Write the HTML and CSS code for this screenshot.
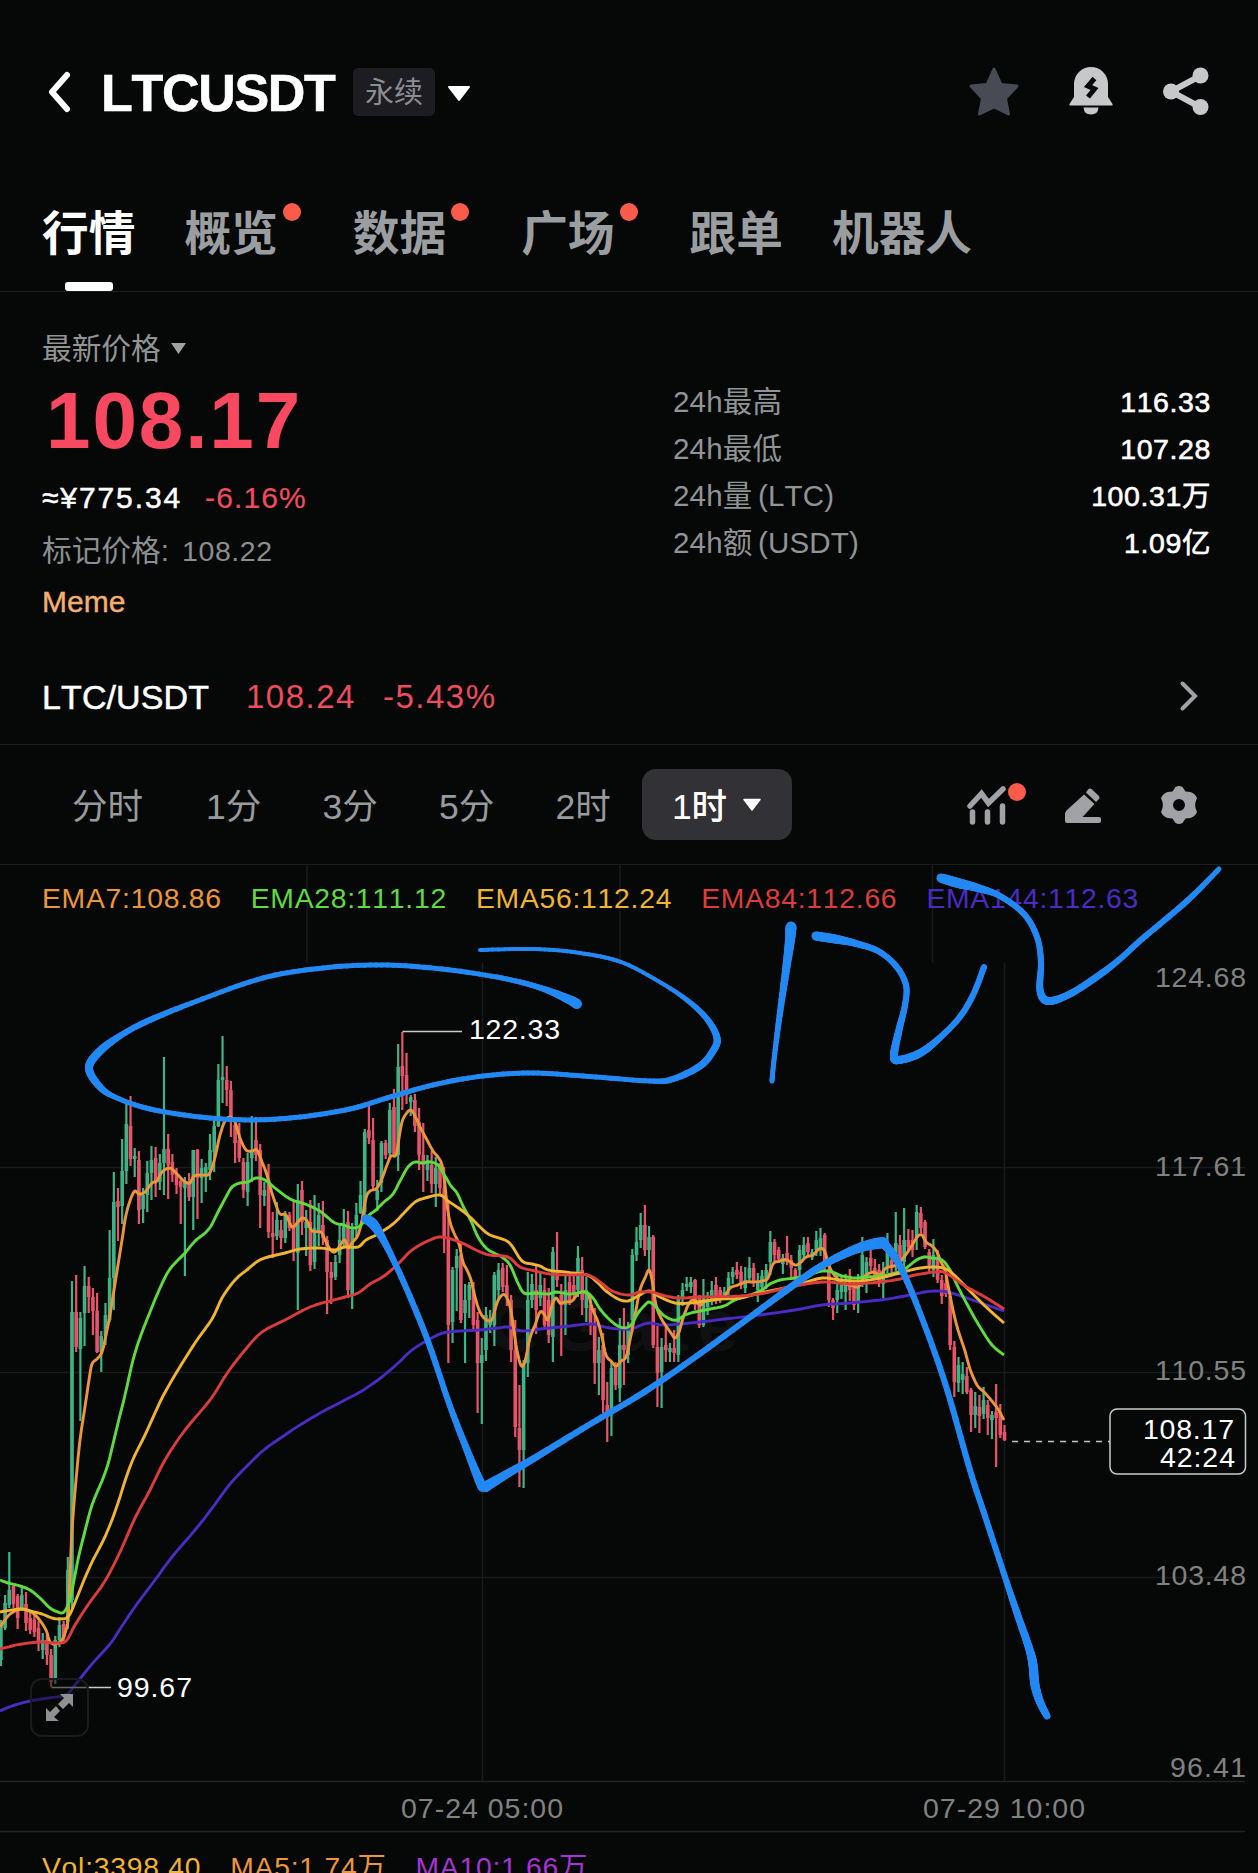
FILE: index.html
```html
<!DOCTYPE html>
<html lang="zh-CN">
<head>
  <meta charset="UTF-8" />
  <meta name="viewport" content="width=device-width, initial-scale=1.0"/>
  <title>LTCUSDT 永续</title>
  <link rel="stylesheet" href="styles.css">
</head>
<body>

<header class="topbar">
  <svg class="back" width="26" height="42" viewBox="0 0 26 42"><path d="M21 4 6 21l15 17" /></svg>
  <h1>LTCUSDT</h1>
  <span class="badge">永续</span>
  <svg class="caret-big" width="26" height="18" viewBox="0 0 26 18"><path d="M3 2h20L13 15z" /></svg>
  <div class="actions">
    <svg width="52" height="50" viewBox="0 0 52 50"><path class="star" d="M26 3l7 15.500 16 1.500-11.500 12.500 3 15.500L26 41l-14.500 7 3-15.500L3 20l16-1.500z" /></svg>
    <svg width="46" height="50" viewBox="0 0 46 50">
      <path class="light" d="M6 31V18a17 17 0 0 1 34 0v13l4.500 7q.8 1.500-1 1.500h-41q-1.800 0-1-1.500z" />
      <path class="light" d="M15.500 41.500h15q-.5 7-7.500 7t-7.500-7z" />
      <path class="bolt" d="M26.500 12.500l-6.500 7.500 6.500 3-6.500 8" />
    </svg>
    <svg width="48" height="50" viewBox="0 0 48 50">
      <path class="share-line" d="M38 10 9 25.500 38 41" />
      <circle class="light" cx="38.500" cy="9.500" r="8" /><circle class="light" cx="9" cy="25.500" r="8" /><circle class="light" cx="38.500" cy="41" r="8" />
    </svg>
  </div>
</header>

<nav class="tabs">
  <a class="tab active">行情</a>
  <a class="tab">概览<i class="dot"></i></a>
  <a class="tab">数据<i class="dot"></i></a>
  <a class="tab">广场<i class="dot"></i></a>
  <a class="tab">跟单</a>
  <a class="tab">机器人</a>
</nav>

<section class="quote">
  <div class="quote-left">
    <div class="label">最新价格 <svg width="17" height="13" viewBox="0 0 17 13"><path d="M1 1h15L8.500 12z" /></svg></div>
    <div class="price">108.17</div>
    <div class="fiat"><span>≈¥775.34</span><span class="down change">-6.16%</span></div>
    <div class="mark">标记价格:<span>108.22</span></div>
    <div class="tag">Meme</div>
  </div>
  <dl class="stats">
    <div><dt>24h最高</dt><dd>116.33</dd></div>
    <div><dt>24h最低</dt><dd>107.28</dd></div>
    <div><dt>24h量 (LTC)</dt><dd>100.31万</dd></div>
    <div><dt>24h额 (USDT)</dt><dd>1.09亿</dd></div>
  </dl>
</section>

<section class="spot">
  <span class="pair">LTC/USDT</span>
  <span class="down spot-price">108.24</span>
  <span class="down">-5.43%</span>
  <svg width="20" height="32" viewBox="0 0 20 32"><path d="M3.500 3.500 16 16 3.500 28.500" /></svg>
</section>

<div class="periods">
  <a>分时</a><a>1分</a><a>3分</a><a>5分</a><a>2时</a>
  <a class="chip">1时<svg width="20" height="14" viewBox="0 0 20 14"><path d="M2 1.500h16L10 12z" /></svg></a>
  <div class="tools">
    <div class="tool">
      <svg width="40" height="40" viewBox="0 0 40 40"><path class="tool-line" d="M3 21 14.500 8.500 21.500 18 36 4" /><path class="tool-bars" d="M5.500 27v10M20.500 27v10M35.500 21v16" /></svg>
      <i class="dot"></i>
    </div>
    <svg width="40" height="40" viewBox="0 0 40 40"><path class="tool-fill" d="M25 4.500q2-2 4 0l6.500 6q2 2 0 4l-2.500 2.500-10-9.500zM21 9.500l10.500 9.500L19.500 32H36q2 0 2 2v2q0 2-2 2H4q-2 0-2-2v-7q0-2 1.500-3.500z" /></svg>
    <svg width="40" height="42" viewBox="0 0 40 42"><path class="tool-fill" fill-rule="evenodd" d="M16.500 3Q20 .8 23.500 3l3 4.500 5 .5Q36 9.500 38 14l-1.500 4q-.8 3 0 6L38 28q-2 4.500-6.500 6l-5 .5-3 4.500Q20 41.200 16.500 39l-3-4.500-5-.5Q4 32.500 2 28l1.500-4q.8-3 0-6L2 14Q4 9.500 8.500 8l5-.5zM20 15a6 6 0 1 0 0 12 6 6 0 0 0 0-12z" /></svg>
  </div>
</div>

<div class="chart">
  <svg id="chart" class="plot" width="1258" height="1008" viewBox="0 865 1258 1008">
    <g class="grid">
      <path d="M0 1167.500H1245M0 1372.500H1245M0 1577.500H1245M307 865V963M620 865V963M932.500 865V963M482.500 963V1781M1004.500 963V1781" />
      <path class="rule" d="M0 1781.500H1245M0 1831.500H1245" />
    </g>
    <path class="watermark-logo" d="M532 1308a22 22 0 1 0 0 32" />
    <text class="watermark" x="550" y="1351" textLength="189">Gate</text>
    <g id="candles"></g>
    <g id="averages"></g>
    <path class="leader" d="M402.500 1031.500H462M51.500 1687.500H111" />
    <g class="marker">
      <text x="469" y="1039" textLength="91">122.33</text>
      <text x="117" y="1697" textLength="75">99.67</text>
    </g>
    <g class="axis">
      <text x="1155" y="987" textLength="91">124.68</text>
      <text x="1155" y="1176" textLength="91">117.61</text>
      <text x="1155" y="1380" textLength="91">110.55</text>
      <text x="1155" y="1585" textLength="91">103.48</text>
      <text x="1170" y="1777" textLength="76">96.41</text>
      <text x="401" y="1818" textLength="162">07-24 05:00</text>
      <text x="923" y="1818" textLength="162">07-29 10:00</text>
    </g>
    <path class="last-line" d="M1012 1441.500H1110" />
    <rect class="last-box" x="1110" y="1409" width="135.500" height="65" rx="7" />
    <g class="marker">
      <text x="1143" y="1439" textLength="91">108.17</text>
      <text x="1160" y="1467" textLength="75">42:24</text>
    </g>
    <g class="expand">
      <rect x="31" y="1679" width="57" height="57" rx="11" />
      <path d="M60 1694h13v13l-4-4-6 6-5-5 6-6zM46 1708l4 4 6-6 4 5-6 6 5 4H46z" />
    </g>
  </svg>
  <div class="legend">
    <span class="ema7">EMA7:108.86</span>
    <span class="ema28">EMA28:111.12</span>
    <span class="ema56">EMA56:112.24</span>
    <span class="ema84">EMA84:112.66</span>
    <span class="ema144">EMA144:112.63</span>
  </div>
  <div class="volume">
    <span class="ema56">Vol:3398.40</span>
    <span class="ema7">MA5:1.74万</span>
    <span class="ma10">MA10:1.66万</span>
  </div>
  <svg id="pen" class="pen" width="1258" height="1008" viewBox="0 865 1258 1008"></svg>
</div>

<script src="chart.js"></script>
</body>
</html>
```

FILE: styles.css
```css
* {
  box-sizing: border-box;
}

body {
  margin: 0;
  width: 1258px;
  height: 1873px;
  overflow: hidden;
  background: #060807;
  color: #fff;
  font-family: "Liberation Sans", "Noto Sans CJK SC", sans-serif;
  font-kerning: none;
}

svg {
  display: block;
  flex: none;
}

.topbar {
  display: flex;
  align-items: center;
  height: 184px;
  padding: 0 48px 0 46px;
}

.back path {
  fill: none;
  stroke: #fff;
  stroke-width: 6;
  stroke-linecap: round;
  stroke-linejoin: round;
}

h1 {
  margin: 2px 0 0 29px;
  width: 252px;
  font-size: 52px;
  line-height: 60px;
  letter-spacing: -1.300px;
  -webkit-text-stroke: 0.600px;
}

.badge {
  width: 82px;
  height: 48px;
  border-radius: 5px;
  background: #1c1c21;
  color: #8b8d92;
  font-size: 29px;
  line-height: 50px;
  text-align: center;
}

.caret-big {
  margin: 4px 0 0 11px;
  fill: #fff;
  stroke: #fff;
  stroke-width: 2;
  stroke-linejoin: round;
}

.actions {
  display: flex;
  align-items: center;
  gap: 48px;
  margin: -2px 0 0 auto;
}

.star {
  fill: #494b54;
  stroke: #494b54;
  stroke-width: 3;
  stroke-linejoin: round;
}

.light {
  fill: #c6c8ca;
}

.bolt {
  fill: none;
  stroke: #060807;
  stroke-width: 5;
}

.share-line {
  fill: none;
  stroke: #c6c8ca;
  stroke-width: 6;
}

.tabs {
  display: flex;
  gap: 49px;
  height: 108px;
  padding: 12px 42px 0;
  border-bottom: 1px solid #1d1f1f;
}

.tab {
  position: relative;
  display: flex;
  height: 95px;
  font-size: 46.700px;
  line-height: 76px;
  font-weight: 700;
  color: #9b9ea1;
}

.tab.active {
  color: #fff;
}

.tab.active::after {
  content: "";
  position: absolute;
  left: 23px;
  bottom: 0;
  width: 48px;
  height: 9px;
  border-radius: 3px;
  background: #fff;
}

.dot {
  width: 18px;
  height: 18px;
  margin: 7px 3px 0 5px;
  border-radius: 50%;
  background: #fb5b4b;
}

.quote {
  display: flex;
  height: 350px;
  padding: 36px 47px 0 42px;
}

.quote-left {
  width: 631px;
}

.label {
  display: flex;
  align-items: center;
  gap: 9px;
  height: 40px;
  font-size: 29.700px;
  line-height: 41px;
  color: #919496;
}

.label svg {
  fill: #a0a3a5;
}

.price {
  height: 104px;
  padding-left: 4px;
  font-size: 80px;
  line-height: 106px;
  font-weight: 700;
  letter-spacing: 1.900px;
  color: #f84960;
}

.fiat {
  display: flex;
  gap: 23px;
  height: 51px;
  font-size: 30px;
  line-height: 52px;
  letter-spacing: 1.900px;
  -webkit-text-stroke: 0.500px;
}

.change {
  letter-spacing: 1.100px;
  -webkit-text-stroke: 0.200px;
}

.down {
  color: #ee4c60;
}

.mark {
  display: flex;
  gap: 13px;
  height: 54px;
  font-size: 29.700px;
  line-height: 56px;
  color: #8b8e90;
}

.mark span {
  font-size: 28.500px;
  letter-spacing: 0.600px;
}

.tag {
  height: 48px;
  font-size: 30px;
  line-height: 50px;
  color: #f3ae72;
  -webkit-text-stroke: 0.400px;
}

.stats {
  flex: 1;
  margin: 50px 0 0;
}

.stats div {
  display: flex;
  justify-content: space-between;
  height: 47px;
  line-height: 48px;
  font-size: 28.500px;
}

.stats dt {
  font-size: 29.500px;
  word-spacing: -3px;
  letter-spacing: 0.200px;
  color: #919496;
}

.stats dd {
  margin: 0;
  letter-spacing: 0.600px;
  -webkit-text-stroke: 0.600px;
}

.spot {
  display: flex;
  align-items: center;
  height: 103px;
  padding: 13px 59px 6px 42px;
  border-bottom: 1px solid #1d1f1f;
  font-size: 33px;
  line-height: 40px;
  letter-spacing: 1.500px;
}

.pair {
  width: 204px;
  font-size: 34px;
  letter-spacing: 0.100px;
  -webkit-text-stroke: 0.500px;
}

.spot-price {
  width: 137px;
}

.spot svg {
  margin: -2px 0 0 auto;
  fill: none;
  stroke: #a0a3a5;
  stroke-width: 4;
  stroke-linecap: round;
}

.periods {
  display: flex;
  align-items: center;
  height: 120px;
  padding: 0 59px 0 72px;
  border-bottom: 1px solid #1d1f1f;
  font-size: 35.500px;
  line-height: 44px;
  color: #989b9e;
}

.periods a {
  width: 116.500px;
  padding-top: 4px;
}

.periods a:first-child {
  width: 134px;
}

.periods a:nth-child(5) {
  width: 86.500px;
}

.periods .chip {
  display: flex;
  align-items: center;
  justify-content: center;
  gap: 15px;
  width: 150px;
  height: 71px;
  border-radius: 14px;
  background: #313136;
  color: #fff;
  font-weight: 500;
}

.chip svg {
  margin-top: -4px;
  fill: #fff;
  stroke: #fff;
  stroke-width: 1.500;
  stroke-linejoin: round;
}

.tools {
  display: flex;
  align-items: center;
  gap: 56px;
  margin-left: auto;
}

.tool {
  position: relative;
}

.tool .dot {
  position: absolute;
  left: 41px;
  top: -2px;
  margin: 0;
}

.tool-line,
.tool-bars {
  fill: none;
  stroke: #a0a2a6;
  stroke-width: 5.500;
  stroke-linecap: round;
}

.tool-fill {
  fill: #a0a2a6;
}

.chart {
  position: relative;
  height: 1008px;
}

.plot {
  font-size: 28.500px;
}

.grid path {
  fill: none;
  stroke: #191b1b;
  stroke-width: 1.500;
}

.grid .rule {
  stroke: #222424;
}

.watermark {
  fill: #0f1111;
  font-size: 74px;
  font-weight: 700;
}

.watermark-logo {
  fill: none;
  stroke: #0f1111;
  stroke-width: 12;
}

.up-candle {
  fill: #3fb286;
}

.down-candle {
  fill: #e8536a;
}

#averages path {
  fill: none;
  stroke-width: 2.900;
  stroke-linejoin: round;
}

.leader {
  stroke: #c9cbcb;
  stroke-width: 1.500;
}

.marker text {
  fill: #fff;
}

.axis text {
  fill: #808282;
}

.last-line {
  stroke: #bfc1c1;
  stroke-width: 1.500;
  stroke-dasharray: 6 6;
}

.last-box {
  fill: #060807;
  stroke: #c9cbcb;
  stroke-width: 1.500;
}

.expand rect {
  fill: rgba(6, 8, 7, 0.5);
  stroke: #191b1c;
  stroke-width: 2;
}

.expand path {
  fill: #8e9092;
}

.legend,
.volume {
  position: absolute;
  left: 42px;
  display: flex;
  gap: 29px;
  font-size: 28.300px;
  line-height: 40px;
  letter-spacing: 0.750px;
  white-space: nowrap;
}

.legend {
  top: 13px;
}

.volume {
  top: 982px;
}

.ema7 {
  color: #ec963c;
  stroke: #ec963c;
}

.ema28 {
  color: #5fdb40;
  stroke: #5fdb40;
}

.ema56 {
  color: #f0b42e;
  stroke: #f0b42e;
}

.ema84 {
  color: #dd3c3c;
  stroke: #dd3c3c;
}

.ema144 {
  color: #4a2bc4;
  stroke: #4a2bc4;
}

.ma10 {
  color: #a535d2;
}

.pen {
  position: absolute;
  left: 0;
  top: 0;
}

.pen line {
  stroke: #2288f4;
  stroke-linecap: round;
}
```

FILE: chart.js
```js
const NS = "http://www.w3.org/2000/svg";

// direction, high, body top, body bottom, low
const candles = `
g1620,1622,1660,1666 g1595,1603,1628,1630 g1552,1590,1605,1608 r1583,1586,1604,1608 r1594,1596,1618,1629
g1585,1595,1608,1611 r1592,1604,1623,1631 r1610,1618,1630,1634 r1614,1620,1632,1637 r1621,1628,1642,1651
g1633,1640,1650,1659 r1635,1640,1655,1665 r1649,1655,1682,1687 g1636,1640,1678,1684 g1617,1625,1640,1647
r1621,1624,1638,1641 g1557,1570,1622,1629 g1281,1312,1600,1608 r1275,1312,1347,1352 g1312,1318,1349,1421
g1266,1286,1313,1346 r1277,1286,1297,1313 r1288,1297,1311,1335 r1293,1311,1352,1353 g1331,1336,1352,1372
g1303,1315,1336,1345 g1230,1278,1320,1322 g1172,1202,1278,1310 r1188,1201,1207,1241 g1139,1171,1206,1224
g1103,1124,1171,1184 r1096,1126,1159,1166 g1148,1156,1159,1177 r1151,1160,1210,1224 g1188,1195,1209,1223
g1161,1173,1195,1212 g1146,1160,1173,1200 r1147,1158,1182,1197 g1154,1163,1182,1190 g1057,1149,1163,1195
r1134,1149,1165,1199 r1154,1162,1175,1182 r1168,1174,1185,1194 r1177,1181,1187,1224 g1177,1182,1188,1276
r1173,1184,1197,1201 g1150,1150,1197,1230 r1149,1150,1178,1219 g1159,1168,1178,1203 g1163,1167,1175,1192
g1134,1150,1170,1180 g1120,1126,1152,1172 g1064,1080,1126,1127 g1036,1077,1080,1103 r1066,1080,1090,1106
r1081,1090,1120,1137 r1120,1125,1143,1163 r1123,1140,1158,1162 r1158,1162,1190,1198 g1153,1162,1192,1206
g1116,1150,1158,1182 r1117,1140,1155,1161 r1144,1150,1195,1228 g1182,1190,1196,1206 r1164,1180,1232,1238
r1212,1233,1237,1258 g1202,1220,1236,1240 r1220,1230,1238,1249 g1211,1215,1238,1243 r1212,1215,1228,1231
r1200,1225,1250,1261 g1184,1200,1253,1310 r1181,1190,1222,1235 g1210,1222,1228,1256 r1200,1222,1265,1271
g1195,1228,1262,1269 g1203,1215,1230,1246 r1201,1225,1238,1245 r1236,1240,1272,1314 r1262,1272,1278,1304
g1255,1262,1277,1280 g1224,1240,1255,1263 g1209,1225,1242,1248 r1211,1222,1290,1298 g1223,1230,1295,1309
g1203,1215,1225,1237 g1181,1195,1213,1214 g1129,1132,1212,1218 r1105,1130,1138,1144 r1118,1140,1186,1190
g1180,1190,1200,1211 g1141,1143,1183,1192 r1140,1143,1155,1159 g1103,1110,1153,1157 r1089,1107,1154,1156
g1044,1067,1155,1171 r1032,1066,1076,1110 r1053,1075,1095,1104 g1095,1097,1102,1116 r1094,1100,1126,1132
r1108,1122,1155,1170 r1123,1155,1165,1192 g1155,1160,1170,1181 r1151,1165,1184,1193 g1157,1168,1184,1207
r1163,1165,1188,1195 r1167,1188,1237,1253 r1203,1237,1325,1363 g1267,1270,1322,1343 g1249,1256,1268,1311
r1243,1255,1320,1323 g1284,1300,1313,1363 g1282,1285,1300,1318 r1282,1290,1325,1330 r1312,1320,1363,1413
g1338,1355,1363,1424 g1307,1315,1350,1361 g1310,1318,1325,1333 g1272,1275,1325,1346 g1263,1270,1290,1300
r1263,1268,1287,1292 r1265,1285,1297,1306 r1295,1300,1350,1362 r1320,1350,1427,1437 r1385,1428,1450,1487
g1360,1363,1450,1488 g1272,1300,1363,1377 g1274,1284,1300,1308 r1264,1290,1310,1334 g1272,1285,1298,1306
r1278,1290,1325,1328 r1288,1300,1335,1343 g1247,1252,1337,1362 r1232,1270,1280,1287 r1284,1295,1305,1356
g1276,1290,1305,1335 r1274,1282,1300,1305 r1273,1285,1295,1298 g1246,1258,1290,1297 r1257,1270,1300,1315
g1277,1290,1308,1322 r1295,1305,1325,1335 r1308,1325,1363,1384 g1337,1350,1363,1395 r1333,1345,1400,1413
r1382,1405,1415,1442 g1362,1368,1412,1436 r1362,1366,1385,1390 g1318,1345,1388,1402 r1308,1345,1350,1385
g1322,1330,1355,1363 g1249,1255,1320,1332 g1227,1242,1255,1261 g1213,1225,1240,1248 r1205,1225,1250,1256
g1226,1237,1250,1270 r1235,1237,1345,1348 r1326,1347,1373,1407 g1338,1347,1372,1408 r1326,1345,1350,1362
g1343,1348,1352,1362 r1330,1348,1353,1362 g1295,1298,1355,1362 g1283,1290,1297,1306 g1277,1284,1287,1291
g1277,1282,1287,1293 r1279,1280,1305,1310 r1295,1298,1325,1328 g1279,1296,1325,1327 g1292,1300,1307,1315
g1281,1290,1300,1305 r1277,1285,1300,1304 r1287,1290,1298,1303 g1287,1292,1297,1300 g1272,1278,1290,1295
g1267,1272,1277,1284 r1262,1270,1275,1279 r1266,1272,1285,1289 g1267,1280,1288,1293 g1257,1268,1278,1283
r1263,1268,1283,1287 g1273,1282,1290,1302 g1270,1276,1287,1293 g1264,1270,1280,1289 g1231,1242,1262,1275
r1239,1242,1255,1263 r1247,1250,1259,1263 g1254,1258,1264,1274 r1236,1253,1260,1265 r1255,1260,1268,1278
r1268,1270,1278,1282 g1245,1250,1270,1277 g1237,1245,1255,1260 r1237,1243,1252,1256 g1249,1252,1257,1260
g1231,1240,1250,1256 g1228,1238,1248,1256 r1233,1235,1265,1272 r1262,1270,1300,1307 r1298,1300,1308,1320
g1273,1290,1300,1313 g1276,1285,1292,1299 g1274,1285,1292,1310 r1269,1280,1290,1301 r1280,1285,1305,1310
g1274,1285,1302,1313 g1237,1255,1280,1287 g1257,1262,1280,1293 r1250,1258,1266,1271 r1259,1268,1276,1279
r1264,1270,1283,1287 g1262,1272,1284,1298 g1233,1250,1268,1273 r1253,1260,1268,1275 g1212,1243,1262,1271
r1235,1245,1258,1263 g1208,1240,1262,1274 r1229,1240,1247,1250 r1230,1240,1250,1257 g1205,1212,1238,1250
r1207,1213,1228,1233 r1220,1222,1247,1249 r1249,1252,1265,1272 g1239,1255,1270,1277 r1250,1258,1280,1283
r1275,1280,1296,1304 r1274,1283,1294,1297 r1292,1296,1345,1350 r1341,1347,1382,1397 g1357,1365,1383,1392
g1362,1374,1380,1394 r1367,1376,1392,1394 r1388,1390,1415,1432 g1392,1406,1415,1428 r1395,1407,1416,1433
g1387,1400,1414,1419 r1400,1405,1418,1435 g1411,1415,1420,1439 r1384,1412,1418,1467 r1404,1412,1435,1438
r1425,1432,1440,1441`.trim().split(/\s+/);

const averages = {
  ema144: "0,1711 12,1706 30,1701 48,1698 66,1695 75,1685 92,1664 110,1644 122,1626 137,1604 155,1580 172,1557 195,1530 213,1507 230,1484 250,1463 265,1449 285,1435 300,1425 322,1412 345,1400 360,1392 378,1380 396,1365 412,1350 430,1339 443,1333 460,1331 480,1330 498,1328 508,1327 522,1331 540,1329 570,1326 590,1324 610,1328 630,1329 648,1323 665,1325 700,1322 725,1319 760,1315 795,1310 822,1305 850,1303 880,1300 905,1296 925,1292 940,1291 955,1294 975,1301 1004,1311",
  ema7: "0,1627 8,1616 15,1611 22,1609 30,1611 38,1618 46,1630 50,1642 56,1644 62,1640 66,1630 68,1618 70,1575 72,1530 76,1480 80,1440 86,1400 89,1380 92,1364 97,1359 102,1352 106,1335 110,1315 114,1290 118,1265 122,1240 126,1215 131,1198 135,1191 139,1194 145,1192 152,1183 157,1181 162,1172 170,1168 177,1174 184,1181 190,1183 194,1176 202,1175 208,1175 212,1168 216,1153 220,1135 225,1121 230,1117 235,1122 240,1138 246,1150 252,1151 257,1150 262,1162 267,1175 271,1190 276,1205 280,1214 286,1215 292,1227 297,1223 302,1218 307,1221 312,1231 321,1232 325,1240 330,1249 335,1252 341,1244 345,1240 348,1248 352,1243 358,1235 362,1220 366,1198 370,1191 377,1188 383,1176 387,1165 391,1156 396,1155 399,1138 402,1122 406,1114 411,1110 416,1118 420,1127 427,1140 433,1151 438,1157 442,1165 445,1185 447,1205 450,1222 454,1233 459,1244 463,1262 467,1270 471,1280 475,1297 480,1312 485,1319 490,1321 493,1317 497,1303 501,1296 505,1295 509,1303 512,1317 516,1345 520,1363 523,1366 526,1357 530,1338 535,1325 540,1312 544,1314 548,1320 552,1305 556,1298 560,1303 565,1302 572,1301 576,1296 580,1292 588,1294 592,1308 598,1322 602,1337 606,1355 611,1361 616,1366 621,1361 626,1357 630,1340 635,1315 640,1290 645,1278 649,1270 652,1280 656,1305 661,1318 666,1326 671,1333 675,1338 679,1332 684,1315 690,1302 695,1300 700,1305 706,1301 714,1300 724,1297 730,1288 738,1285 746,1282 752,1282 762,1281 768,1278 773,1264 780,1261 787,1260 795,1265 800,1263 806,1257 813,1255 819,1249 824,1250 828,1262 831,1270 836,1277 842,1283 850,1285 858,1287 862,1281 866,1275 874,1272 880,1275 886,1268 896,1265 904,1257 909,1250 914,1242 918,1236 922,1235 926,1242 932,1246 937,1252 941,1262 945,1270 948,1285 953,1310 958,1330 965,1351 970,1369 977,1385 984,1392 991,1400 998,1409 1004,1420",
  ema28: "0,1580 8,1583 20,1586 30,1590 40,1598 50,1608 58,1612 64,1612 70,1600 74,1580 79,1555 84,1535 92,1505 102,1481 108,1464 113,1444 119,1419 125,1395 133,1360 141,1335 150,1312 160,1288 170,1269 185,1253 195,1241 204,1234 211,1226 218,1212 226,1197 232,1187 240,1183 248,1182 256,1178 265,1180 275,1188 290,1199 305,1204 318,1210 326,1216 335,1223 344,1225 352,1228 360,1226 368,1216 376,1210 384,1202 393,1194 400,1181 408,1167 415,1162 422,1163 430,1162 438,1165 445,1176 451,1186 457,1193 463,1206 471,1221 478,1237 486,1248 494,1253 502,1257 510,1265 517,1281 524,1293 535,1293 548,1294 556,1292 570,1294 585,1292 593,1298 600,1309 610,1320 620,1327 630,1326 638,1313 645,1305 649,1302 655,1306 662,1314 670,1319 677,1320 685,1315 695,1312 710,1309 724,1306 735,1300 750,1295 762,1290 770,1284 780,1280 795,1278 808,1275 822,1271 832,1272 842,1276 855,1278 865,1277 880,1276 895,1273 905,1269 915,1261 924,1257 932,1258 942,1260 950,1270 957,1285 968,1306 980,1327 992,1345 1004,1355",
  ema56: "0,1612 20,1609 30,1611 42,1614 52,1618 60,1619 68,1617 74,1605 84,1580 93,1560 102,1543 110,1525 118,1503 126,1478 134,1457 145,1435 155,1413 163,1396 178,1370 195,1343 212,1319 222,1298 235,1280 248,1269 258,1261 268,1257 285,1253 300,1249 320,1248 335,1250 345,1247 358,1247 366,1240 378,1234 393,1224 404,1213 415,1202 425,1198 440,1195 448,1201 460,1209 470,1217 480,1227 490,1235 505,1240 512,1246 522,1261 532,1264 540,1266 548,1270 565,1272 587,1275 598,1283 606,1291 618,1299 628,1301 638,1296 649,1291 660,1297 675,1303 690,1303 705,1301 720,1299 740,1298 760,1293 780,1289 800,1284 822,1278 840,1280 860,1281 880,1278 900,1273 915,1269 930,1267 943,1268 952,1273 965,1286 985,1306 1004,1323",
  ema84: "0,1649 12,1646 22,1644 40,1642 55,1643 66,1641 75,1625 90,1602 105,1581 120,1552 135,1518 150,1490 165,1460 185,1430 210,1400 228,1372 245,1350 262,1332 285,1320 310,1307 330,1301 345,1297 358,1293 370,1284 384,1276 398,1264 412,1250 430,1240 442,1237 460,1242 478,1251 490,1255 508,1257 520,1267 535,1271 550,1274 570,1275 588,1275 600,1282 612,1291 628,1295 640,1292 652,1292 662,1295 678,1298 700,1297 740,1296 765,1293 790,1287 822,1282 850,1284 880,1282 900,1279 915,1275 935,1272 946,1273 965,1286 985,1297 1004,1309"
};

// x, y, pen width
const strokes = [
  "577,1004,10 568,999,9 541,988,6 502,978,5 442,969,5 382,965,5 323,968,5 263,978,5 197,1001,5 150,1020,6 123,1034,6 100,1051,8 89,1068,8 100,1087,7 117,1098,5 150,1109,5 200,1117,5 250,1120,5 300,1117,5 350,1109,5 387,1098,5 433,1085,5 483,1076,5 533,1073,5 583,1076,5 650,1081,5 673,1079,6 700,1066,7 713,1051,7 717,1038,7 707,1019,6 687,1000,5 658,981,4 621,962,4 580,953,4 535,949,4 480,950,4",
  "791,927,11 790,940,10 786,970,8 779,1020,6 774,1060,5 772,1081,5",
  "816,936,9 835,939,9 854,943,7 878,951,6 896,966,6 906,985,6 905,1005,6 899,1030,7 894,1055,8 899,1060,8 922,1052,8 946,1032,6 962,1014,6 974,993,6 984,967,6",
  "941,878,9 958,883,10 978,888,8 1000,896,6 1024,914,6 1037,937,6 1041,962,6 1040,990,7 1048,1001,8 1070,994,7 1098,976,7 1120,959,6 1142,939,6 1187,901,6 1219,869,5",
  "366,1219,9 374,1225,10 385,1243,7 400,1274,6 416,1311,6 430,1347,6 450,1406,6 467,1450,7 480,1482,9 484,1487,10 490,1484,10 512,1471,8 533,1459,7 587,1426,6 633,1399,6 661,1381,6 701,1353,6 742,1323,6 795,1284,7 823,1265,7 856,1249,9 880,1243,11 886,1246,9 900,1266,7 920,1313,6 945,1383,6 970,1470,6 985,1516,6 1005,1577,6 1017,1613,7 1029,1648,8 1033,1665,9 1035,1685,9 1040,1702,8 1047,1716,7"
];

function add(parent, name, attrs) {
  const el = document.createElementNS(NS, name);
  for (const key in attrs) el.setAttribute(key, attrs[key]);
  parent.appendChild(el);
}

function parse(text) {
  return text.split(" ").map(p => p.split(",").map(Number));
}

// Catmull-Rom sampling between the points
function smooth(points, steps) {
  const out = [];
  for (let i = 0; i < points.length - 1; i++) {
    const a = points[Math.max(i - 1, 0)], b = points[i];
    const c = points[i + 1], d = points[Math.min(i + 2, points.length - 1)];
    for (let s = 0; s < steps; s++) {
      const t = s / steps;
      out.push(b.map((v, k) => 0.5 * (2 * v + (c[k] - a[k]) * t
        + (2 * a[k] - 5 * v + 4 * c[k] - d[k]) * t * t
        + (3 * v - a[k] - 3 * c[k] + d[k]) * t * t * t)));
    }
  }
  out.push(points[points.length - 1]);
  return out;
}

const candleLayer = document.getElementById("candles");
candles.forEach((item, i) => {
  const cls = item[0] === "g" ? "up-candle" : "down-candle";
  const [high, top, bottom, low] = item.slice(1).split(",").map(Number);
  const x = 1004.5 - 4.1816 * (candles.length - 1 - i);
  add(candleLayer, "rect", { class: cls, x: x - 1.1, y: high, width: 2.2, height: low - high });
  add(candleLayer, "rect", { class: cls, x: x - 1.8, y: top, width: 3.6, height: bottom - top });
});

const averageLayer = document.getElementById("averages");
for (const name in averages) {
  const points = smooth(parse(averages[name]), 4);
  add(averageLayer, "path", { class: name, d: "M" + points.map(p => p[0].toFixed(1) + " " + p[1].toFixed(1)).join("L") });
}

const pen = document.getElementById("pen");
strokes.forEach(text => {
  const points = smooth(parse(text), 10);
  for (let i = 1; i < points.length; i++) {
    const [x1, y1] = points[i - 1], [x2, y2, width] = points[i];
    add(pen, "line", { x1, y1, x2, y2, "stroke-width": width });
  }
});
```
